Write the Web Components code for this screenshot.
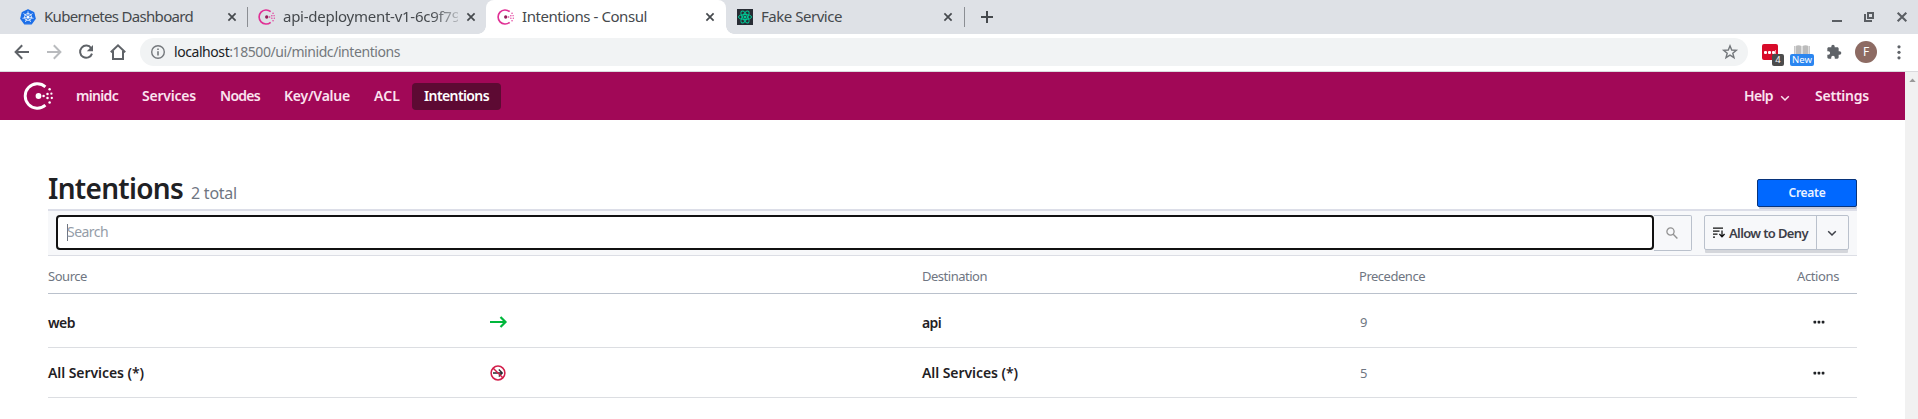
<!DOCTYPE html>
<html lang="en"><head><meta charset="utf-8"><title>Intentions - Consul</title>
<style>
body{margin:0;width:1918px;height:419px;overflow:hidden;background:#fff;font-family:"Noto Sans","Open Sans",sans-serif;font-size:14px}
</style></head><body>
<consul-window></consul-window>
<script>
const define=(name,css,html,ready)=>customElements.define(name,class extends HTMLElement{
  constructor(){super();this.attachShadow({mode:'open'}).innerHTML='<style>*{box-sizing:border-box}'+css+'</style>'+html}
  connectedCallback(){if(ready)ready(this,this.shadowRoot)}
});

/* A single-line label tracked to a given measure */
define('fit-label',':host{display:inline-block;flex:none;white-space:nowrap}span{display:inline-block}','<span><slot></slot></span>',(h,r)=>{
  const w=+h.getAttribute('w'),s=r.querySelector('span');h.style.width=w+'px';
  const nat=s.getBoundingClientRect().width,n=h.textContent.length;
  s.style.letterSpacing=((w-nat)/n).toFixed(3)+'px';
});

const icons={
consul:['0 0 28 28','<g fill="currentColor"><path d="M20.4 23.2A12.2 12.2 0 1 1 20.4 4.8" fill="none" stroke="currentColor" stroke-width="2.9"/><circle class="dot" cx="13.5" cy="14" r="2.9"/><circle cx="18.6" cy="14" r="1.3"/><circle cx="22.5" cy="11.9" r="1.25"/><circle cx="22.5" cy="16" r="1.25"/><circle cx="26.4" cy="11.7" r="1.15"/><circle cx="26.8" cy="16" r="1.15"/><circle cx="24.6" cy="7.3" r="1.25"/><circle cx="24.6" cy="20.6" r="1.25"/></g>'],
kube:['0 0 16 16','<path d="M8 .8 13.7 3.5 15.2 9.6 11.4 14.8H4.6L.8 9.6 2.3 3.5Z" fill="#1b6ee8" stroke="#1b6ee8" stroke-width="1.2" stroke-linejoin="round"/><g fill="none" stroke="#fff" stroke-width=".8"><circle cx="8" cy="8" r="3.5"/><path d="M8 2.3V6.8M3.5 4.5 7 7.2M2.5 9.3 6.8 8.4M5.4 13 7.4 9M10.6 13 8.6 9M13.5 9.3 9.2 8.4M12.5 4.5 9 7.2"/></g><circle cx="8" cy="8" r="1.2" fill="#fff"/>'],
react:['0 0 16 16','<path fill="#282c34" d="M0 0h16v16H0z"/><g fill="none" stroke="#00c795" stroke-width="1"><ellipse cx="8" cy="8" rx="6.6" ry="2.5"/><ellipse cx="8" cy="8" rx="6.6" ry="2.5" transform="rotate(60 8 8)"/><ellipse cx="8" cy="8" rx="6.6" ry="2.5" transform="rotate(120 8 8)"/></g><circle cx="8" cy="8" r="1.5" fill="#00c795"/>'],
close:['0 0 10 10','<path d="M1.4 1.4 8.6 8.6M8.6 1.4 1.4 8.6" stroke="currentColor" stroke-width="1.7"/>'],
plus:['0 0 12 12','<path d="M6 0V12M0 6H12" stroke="currentColor" stroke-width="2"/>'],
back:['0 0 16 16','<path d="M15 8H2M8.2 1.3 1.6 8l6.6 6.7" fill="none" stroke="currentColor" stroke-width="2"/>'],
fwd:['0 0 16 16','<path d="M1 8H14M7.8 1.3 14.4 8l-6.6 6.7" fill="none" stroke="currentColor" stroke-width="2"/>'],
reload:['0 0 16 16','<path d="M13.2 4.2A6.1 6.1 0 1 0 14 9.6" fill="none" stroke="currentColor" stroke-width="2"/><path d="M15 1V7.2H8.8Z" fill="currentColor"/>'],
home:['0 0 16 16','<path d="M.8 8.2 8 1.3l7.2 6.9M3 7V15H13V7" fill="none" stroke="currentColor" stroke-width="2"/>'],
info:['0 0 16 16','<circle cx="8" cy="8" r="6.3" fill="none" stroke="currentColor" stroke-width="1.4"/><path d="M8 7.2V11.6M8 4.4V6" stroke="currentColor" stroke-width="1.6"/>'],
star:['0 0 16 16','<path d="M8 1.8 9.7 6 14.3 6.3 10.8 9.2 12 13.7 8 11.2 4 13.7 5.2 9.2 1.7 6.3 6.3 6Z" fill="none" stroke="currentColor" stroke-width="1.4"/>'],
puzzle:['0 0 24 24','<path fill="currentColor" d="M20.5 11H19V7c0-1.1-.9-2-2-2h-4V3.500a2.500 2.500 0 0 0-5 0V5H4c-1.100 0-2 .9-2 2v3.800H3.500a2.700 2.700 0 0 1 0 5.400H2V20c0 1.100.9 2 2 2h3.800v-1.500a2.700 2.700 0 0 1 5.400 0V22H17c1.100 0 2-.9 2-2v-4h1.500a2.500 2.500 0 0 0 0-5z"/>'],
dots:['0 0 4 16','<g fill="currentColor"><circle cx="2" cy="2.800" r="1.600"/><circle cx="2" cy="8.300" r="1.600"/><circle cx="2" cy="13.800" r="1.600"/></g>'],
more:['0 0 12 4','<g fill="currentColor"><rect x=".5" y=".8" width="2.700" height="2.600" rx=".6"/><rect x="4.600" y=".8" width="2.700" height="2.600" rx=".6"/><rect x="8.700" y=".8" width="2.700" height="2.600" rx=".6"/></g>'],
min:['0 0 10 10','<path fill="currentColor" d="M0 8H10V10H0z"/>'],
restore:['0 0 10 10','<path d="M4 1H9V6H4zM1 2V9H8" fill="none" stroke="currentColor" stroke-width="2"/>'],
chev:['0 0 10 10','<path d="M1.200 3.200 5 7 8.800 3.200" fill="none" stroke="currentColor" stroke-width="1.500"/>'],
search:['0 0 12 12','<circle cx="4.500" cy="4.500" r="3.600" fill="none" stroke="currentColor" stroke-width="1.300"/><path d="M7.200 7.200 11.400 11.400" stroke="currentColor" stroke-width="1.400"/>'],
sort:['0 0 12 11','<path d="M0 1H10M0 4H6.500M0 7H4.500M0 10H2M9 3.500V9.500M6.400 7 9 9.800 11.600 7" fill="none" stroke="currentColor" stroke-width="1.250"/>'],
allow:['0 0 17 12','<path d="M0 6H15.500M10.500 1 15.500 6 10.500 11" fill="none" stroke="#00b73c" stroke-width="2.200"/>'],
deny:['0 0 16 16','<path d="M3 8H12.500M8.800 4.500 12.300 8 8.800 11.500" fill="none" stroke="#25282e" stroke-width="1.300"/><circle cx="8" cy="8" r="6.900" fill="none" stroke="#d21e4a" stroke-width="1.500"/><path d="M3.200 3.200 12.800 12.800" stroke="#d21e4a" stroke-width="1.500"/>'],
up:['0 0 8 5','<path d="M0 5 4 .5 8 5Z" fill="currentColor"/>'],
book:['0 0 16 10','<path d="M0 2H1V10H0zM15 2H16V10H15z" fill="#c8c8c8"/><path d="M1.500 2Q4.500 .3 7.500 2V10H1.500zM8.500 2Q11.500 .3 14.500 2V10H8.500z" fill="#bcbcbc"/>']
};
define('ui-icon',':host{display:block;flex:none}svg{display:block;width:100%;height:100%;overflow:visible}.dot{fill:var(--dot,currentColor)}','<svg></svg>',(h,r)=>{
  const i=icons[h.getAttribute('name')],s=r.querySelector('svg');s.setAttribute('viewBox',i[0]);s.innerHTML=i[1];
  h.style.width=h.getAttribute('w')+'px';h.style.height=(h.getAttribute('h')||h.getAttribute('w'))+'px';
});

define('browser-tab',`:host{display:flex;align-items:center;flex:none;width:239px;height:34px;color:#45494d;font-size:15px;line-height:33px;padding:0 9px 0 14px}
:host([active]){background:#fff;border-radius:8px 8px 0 0;position:relative;width:240px;margin-right:-1px}
:host([active])::before,:host([active])::after{content:"";position:absolute;bottom:0;width:8px;height:8px;background:radial-gradient(circle at 0 0,#dee1e6 7.500px,#fff 8px);left:-8px}
:host([active])::after{left:auto;right:-8px;background:radial-gradient(circle at 100% 0,#dee1e6 7.500px,#fff 8px)}
.t{flex:1;overflow:hidden;margin-left:8px;height:34px;white-space:nowrap}:host([fade]) .t{-webkit-mask:linear-gradient(90deg,#000 148px,transparent 184px)}
.x{margin:0 1px 0 8px}`,`<slot name="icon"></slot><div class="t"><slot></slot></div><ui-icon class="x" name="close" w="10"></ui-icon><slot name="end"></slot>`);

define('tab-strip',`:host{display:flex;height:34px;background:#dee1e6;color:#45494d;align-items:center;padding-left:6px}
i{width:1px;height:20px;background:#8b8e93;flex:none}.pink{color:#e03095;--dot:#961d59}
.c{margin-left:auto;display:flex;align-items:center;gap:22px;padding-right:10px;color:#5a5e63}
.plus{margin-left:16px}`,
`<browser-tab style="width:241px"><ui-icon slot="icon" name="kube" w="16"></ui-icon><fit-label w="149">Kubernetes Dashboard</fit-label></browser-tab><i></i>
<browser-tab fade style="width:238px;padding-left:11px;padding-right:9px"><ui-icon slot="icon" class="pink" name="consul" w="16"></ui-icon><fit-label w="177">api-deployment-v1-6c9f79</fit-label></browser-tab>
<browser-tab active style="padding-left:12px;padding-right:10px"><ui-icon slot="icon" class="pink" name="consul" w="16"></ui-icon><fit-label w="125">Intentions - Consul</fit-label></browser-tab>
<browser-tab style="padding-left:12px;padding-right:10px"><ui-icon slot="icon" name="react" w="16"></ui-icon><fit-label w="81">Fake Service</fit-label></browser-tab><i></i>
<ui-icon class="plus" name="plus" w="12"></ui-icon>
<div class="c"><ui-icon name="min" w="10"></ui-icon><ui-icon name="restore" w="10"></ui-icon><ui-icon name="close" w="12"></ui-icon></div>`);

define('browser-toolbar',`:host{display:flex;height:38px;background:#fff;border-bottom:1px solid #dadadd;align-items:center;color:#5f6368;padding:0 17px 1px 14px}
.n{display:flex;gap:16px}.n :nth-child(2){color:#b9bbbe}
.o{margin-left:14px;width:1608px;height:28px;border-radius:14px;background:#f1f3f4;display:flex;align-items:center;padding:0 10px;line-height:28px;font-size:14px;color:#74787c}
.o b{font-weight:400;color:#202124}.o fit-label{margin-left:8px}.star{margin-left:auto}
.e{position:relative;flex:none;width:16px;height:16px}.red{background:#d80b2a;border-radius:2px;margin-left:14px}.red::before{content:"";position:absolute;left:2px;top:7px;width:3px;height:3px;border-radius:1px;background:#fff;box-shadow:4px 0 #fff,8px 0 #fff}.red::after{content:"";position:absolute;left:13px;top:6px;width:1px;height:5px;background:#ff9caa}
.g{position:absolute;z-index:1;font-size:9.500px;line-height:12px;height:12px;color:#fff;text-align:center;border-radius:2px;top:10px}
.bk{margin-left:16px}.pz{margin-left:16px}
.av{width:22px;height:22px;border-radius:50%;background:#8d6b63;color:#fff;font-size:12px;line-height:22px;text-align:center;margin-left:13px}`,
`<div class="n"><ui-icon name="back" w="16"></ui-icon><ui-icon name="fwd" w="16"></ui-icon><ui-icon name="reload" w="16"></ui-icon><ui-icon name="home" w="16"></ui-icon></div>
<div class="o"><ui-icon name="info" w="16"></ui-icon><fit-label w="226"><b>localhost</b>:18500/ui/minidc/intentions</fit-label><ui-icon class="star" name="star" w="16"></ui-icon></div>
<div class="e red"><div class="g" style="left:10px;width:12px;background:#4c4c4c">4</div></div>
<div class="e bk"><ui-icon name="book" w="16" h="10"></ui-icon><div class="g" style="left:-4px;width:24px;background:#2b86f0">New</div></div>
<ui-icon class="pz" name="puzzle" w="16"></ui-icon><div class="av">F</div><ui-icon name="dots" w="4" h="16" style="margin-left:auto"></ui-icon>`);

define('consul-nav',`:host{display:flex;height:48px;background:#a10857;align-items:center;color:#fbe3ef;font-weight:600;font-size:14px;line-height:25px;padding:0 36px 0 25px}
ui-icon[name=consul]{color:#fff;margin-right:11px}span{padding:0 12px;height:27px;border-radius:4px;display:flex;align-items:flex-start}
.on{background:#5d0a33;color:#fff}.h{margin-left:auto;gap:7px;padding-right:13px}`,
`<ui-icon name="consul" w="28"></ui-icon><span><fit-label w="42">minidc</fit-label></span><span><fit-label w="54">Services</fit-label></span><span><fit-label w="40">Nodes</fit-label></span><span><fit-label w="66">Key/Value</fit-label></span><span><fit-label w="26">ACL</fit-label></span><span class="on"><fit-label w="65">Intentions</fit-label></span>
<span class="h"><fit-label w="29">Help</fit-label><ui-icon name="chev" w="10" style="margin-top:10px"></ui-icon></span><span style="padding-right:0"><fit-label w="54">Settings</fit-label></span>`);

define('page-header',`:host{display:flex;height:91px;border-bottom:2px solid #dcdee8;align-items:baseline;padding-top:49px}
h1{margin:0;font-size:28px;font-weight:600;line-height:38px;color:#1f2124}small{font-size:16px;color:#6f7682;margin-left:8px}
button{margin:10px 0 0 auto;align-self:flex-start;width:100px;height:28px;background:#0068ff;border:1px solid #07337b;border-radius:2px;color:#eaf2ff;font:600 12px/24px "Noto Sans",sans-serif;padding:0;box-shadow:1px 3px 0 -1px #c5cadb}`,
`<h1><fit-label w="135">Intentions</fit-label></h1><small><fit-label w="46">2 total</fit-label></small><button><fit-label w="37">Create</fit-label></button>`);

define('filter-bar',`:host{display:flex;height:45px;background:#f7f8fa;border-bottom:1px solid #dcdee5;padding:4px 8px;align-items:flex-start}
.i{width:1598px;height:35px;background:#fff;border:2px solid #111;border-radius:4px;padding-left:9px;display:flex;align-items:center;color:#959da8;font-size:14px;line-height:18px}
.i i{width:1px;height:17px;background:#6f7682;margin-right:-1px}.i fit-label{margin-top:-1px}
.s{width:38px;height:36px;border:1px solid #bac1cc;border-left:0;border-radius:0 2px 2px 0;display:flex;align-items:center;justify-content:center;color:#929292;padding-right:1px}
.d{margin-left:auto;width:145px;height:35px;border:1px solid #bac1cc;border-radius:2px;box-shadow:0 4px 0 -1px #d4d6db;background:#f7f8fa;display:flex;align-items:center;color:#3d4048;font-size:13px;font-weight:600}
.l{width:112px;height:33px;border-right:1px solid #bac1cc;padding-left:8px;display:flex;align-items:center;gap:4px}.l ui-icon{color:#111}.c{margin-left:10px}`,
`<div class="i"><i></i><fit-label w="41">Search</fit-label></div><div class="s"><ui-icon name="search" w="12"></ui-icon></div>
<div class="d"><div class="l"><ui-icon name="sort" w="12" h="11"></ui-icon><fit-label w="79">Allow to Deny</fit-label></div><ui-icon class="c" name="chev" w="10"></ui-icon></div>`);

define('intention-row',`:host{display:grid;grid-template-columns:437px 437px 437px 1fr 60px;height:50px;border-bottom:1px solid #dcdee2;align-items:center;color:#1f2124;font-weight:600;font-size:14px}
:host([tall]){height:54px;padding-top:3px}:host([head]){height:38px;border-color:#bac1cc;color:#6f7682;font-weight:400;font-size:13px;padding-top:3px}
.p{font-weight:400;font-size:13px;color:#6f7682}:host(:not([head])) .a{padding-left:16px}:host(:not([head])) .b{padding-left:5px}
:host(:not([head])) .p{padding-left:1px}`,
`<div class="s"><slot name="source"></slot></div><div class="b"><slot name="effect"></slot></div><div><slot name="dest"></slot></div><div class="p"><slot name="prec"></slot></div><div class="a"><slot name="act"></slot></div>`);

define('consul-window',`:host{display:block;height:419px;overflow:hidden}
.v{display:flex;height:347px}.pg{flex:1}.m{padding:0 48px}.sb{width:13px;background:#f1f1f1;color:#999;padding:6px 0 0 4px}`,
`<tab-strip></tab-strip><browser-toolbar></browser-toolbar><div class="v"><div class="pg"><consul-nav></consul-nav><div class="m">
<page-header></page-header><filter-bar></filter-bar>
<intention-row head><fit-label slot="source" w="39">Source</fit-label><fit-label slot="dest" w="65">Destination</fit-label><fit-label slot="prec" w="66">Precedence</fit-label><fit-label slot="act" w="42">Actions</fit-label></intention-row>
<intention-row tall><fit-label slot="source" w="27">web</fit-label><ui-icon slot="effect" name="allow" w="17" h="12"></ui-icon><fit-label slot="dest" w="19">api</fit-label><span slot="prec">9</span><ui-icon slot="act" name="more" w="12" h="4"></ui-icon></intention-row>
<intention-row><fit-label slot="source" w="96">All Services (*)</fit-label><ui-icon slot="effect" name="deny" w="16"></ui-icon><fit-label slot="dest" w="96">All Services (*)</fit-label><span slot="prec">5</span><ui-icon slot="act" name="more" w="12" h="4"></ui-icon></intention-row>
</div></div><div class="sb"><ui-icon name="up" w="7" h="4"></ui-icon></div></div>`);
</script>
</body></html>
